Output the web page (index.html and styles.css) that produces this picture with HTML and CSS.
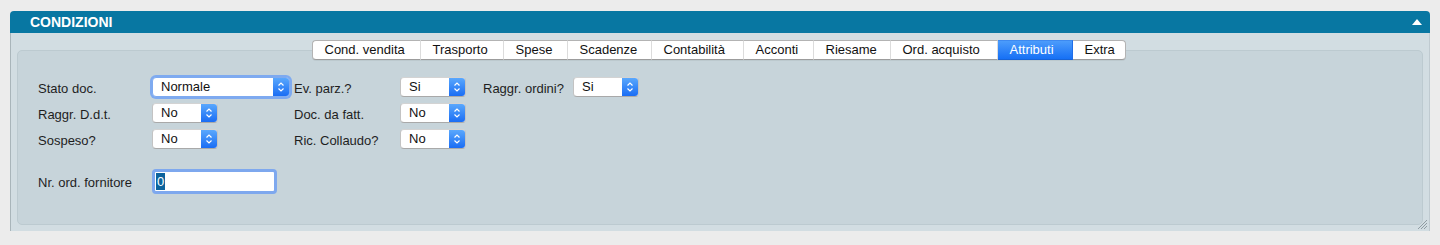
FILE: index.html
```html
<!DOCTYPE html>
<html lang="it">
<head>
<meta charset="utf-8">
<title>Condizioni</title>
<link rel="stylesheet" href="styles.css">
</head>
<body>
<div class="panel">
  <div class="header">
    <span class="title">CONDIZIONI</span>
    <svg class="collapse" width="10" height="6" viewBox="0 0 10 6"><polygon points="0,6 5,0 10,6" fill="#fff"/></svg>
  </div>
  <div class="body">
    <div class="tabs">
      <span class="tab">Cond. vendita</span>
      <span class="tab">Trasporto</span>
      <span class="tab">Spese</span>
      <span class="tab">Scadenze</span>
      <span class="tab">Contabilità</span>
      <span class="tab">Acconti</span>
      <span class="tab">Riesame</span>
      <span class="tab">Ord. acquisto</span>
      <span class="tab active">Attributi</span>
      <span class="tab">Extra</span>
    </div>
    <div class="box">
      <div class="grid">
        <span class="lbl">Stato doc.</span>
        <span class="sel wide focus"><span class="val">Normale</span><span class="btn"><svg width="8" height="12" viewBox="0 0 8 12"><path d="M1.5 4.5 L4 2 L6.5 4.5 M1.5 7.5 L4 10 L6.5 7.5" fill="none" stroke="#fff" stroke-width="1.2"/></svg></span></span>
        <span class="lbl">Ev. parz.?</span>
        <span class="sel"><span class="val">Si</span><span class="btn"><svg width="8" height="12" viewBox="0 0 8 12"><path d="M1.5 4.5 L4 2 L6.5 4.5 M1.5 7.5 L4 10 L6.5 7.5" fill="none" stroke="#fff" stroke-width="1.2"/></svg></span></span>
        <span class="lbl">Raggr. ordini?</span>
        <span class="sel"><span class="val">Si</span><span class="btn"><svg width="8" height="12" viewBox="0 0 8 12"><path d="M1.5 4.5 L4 2 L6.5 4.5 M1.5 7.5 L4 10 L6.5 7.5" fill="none" stroke="#fff" stroke-width="1.2"/></svg></span></span>

        <span class="lbl">Raggr. D.d.t.</span>
        <span class="sel"><span class="val">No</span><span class="btn"><svg width="8" height="12" viewBox="0 0 8 12"><path d="M1.5 4.5 L4 2 L6.5 4.5 M1.5 7.5 L4 10 L6.5 7.5" fill="none" stroke="#fff" stroke-width="1.2"/></svg></span></span>
        <span class="lbl">Doc. da fatt.</span>
        <span class="sel"><span class="val">No</span><span class="btn"><svg width="8" height="12" viewBox="0 0 8 12"><path d="M1.5 4.5 L4 2 L6.5 4.5 M1.5 7.5 L4 10 L6.5 7.5" fill="none" stroke="#fff" stroke-width="1.2"/></svg></span></span>
        <span></span><span></span>

        <span class="lbl">Sospeso?</span>
        <span class="sel"><span class="val">No</span><span class="btn"><svg width="8" height="12" viewBox="0 0 8 12"><path d="M1.5 4.5 L4 2 L6.5 4.5 M1.5 7.5 L4 10 L6.5 7.5" fill="none" stroke="#fff" stroke-width="1.2"/></svg></span></span>
        <span class="lbl">Ric. Collaudo?</span>
        <span class="sel"><span class="val">No</span><span class="btn"><svg width="8" height="12" viewBox="0 0 8 12"><path d="M1.5 4.5 L4 2 L6.5 4.5 M1.5 7.5 L4 10 L6.5 7.5" fill="none" stroke="#fff" stroke-width="1.2"/></svg></span></span>
        <span></span><span></span>
      </div>
      <div class="row4">
        <span class="lbl">Nr. ord. fornitore</span>
        <span class="input"><span class="selected">0</span></span>
      </div>
    </div>
    <svg class="grip" width="10" height="10" viewBox="0 0 10 10"><path d="M1 10 L10 1 M4 10 L10 4 M7 10 L10 7" stroke="#8f9ca2" stroke-width="1"/></svg>
  </div>
</div>
</body>
</html>
```
FILE: styles.css
```css
html, body {
  margin: 0;
  padding: 0;
  background: #ececec;
}
body {
  padding: 11px 0 0 10px;
  font-family: "Liberation Sans", Arial, sans-serif;
  font-size: 13px;
  color: #1e1e1e;
}
.panel {
  width: 1420px;
  position: relative;
  box-shadow: 0 1px 0 #b4b4b4;
}
.header {
  height: 22px;
  background: #0877a2;
  border-radius: 4px 4px 0 0;
  display: flex;
  align-items: center;
  justify-content: space-between;
  padding: 0 8px 0 20px;
}
.title {
  color: #fff;
  font-weight: bold;
  font-size: 14px;
}
.collapse {
  margin-top: -1px;
}
.body {
  background: #d2dde2;
  border-left: 1px solid #a9b5ba;
  border-right: 1px solid #bfcad0;
  padding: 7px 6px 6px 6px;
  position: relative;
}
.tabs {
  display: flex;
  justify-content: center;
  margin: 0 0 -10px 0;
  padding-right: 3px;
  position: relative;
  z-index: 1;
}
.tab {
  height: 18px;
  line-height: 18px;
  background: #fff;
  border-top: 1px solid #b3b3b3;
  border-bottom: 1px solid #9c9c9c;
  border-right: 1px solid #dcdcdc;
  padding: 0 12px;
  color: #111;
  box-shadow: 0 1px 0 rgba(0,0,0,0.05);
}
.tab:first-child {
  border-left: 1px solid #b3b3b3;
  border-radius: 4px 0 0 4px;
}
.tab:last-child {
  border-right: 1px solid #b3b3b3;
  border-radius: 0 4px 4px 0;
}
.tab:nth-child(1) { width: 83px; }
.tab:nth-child(2) { width: 58px; }
.tab:nth-child(3) { width: 39px; }
.tab:nth-child(4) { width: 59px; }
.tab:nth-child(5) { width: 67px; }
.tab:nth-child(6) { width: 45px; }
.tab:nth-child(7) { width: 52px; }
.tab:nth-child(8) { width: 82px; }
.tab:nth-child(9) { width: 50px; }
.tab:nth-child(10) { width: 28px; }
.tab.active {
  background: linear-gradient(#4c9cfb, #1670f5);
  color: #fff;
  border-top-color: #3d89f0;
  border-bottom-color: #1663d8;
  border-right-color: #1f6ee8;
}
.box {
  background: #c7d4da;
  border: 1px solid #bccad0;
  border-radius: 5px;
  height: 175px;
  padding: 26px 0 0 20px;
  box-sizing: border-box;
}
.grid {
  display: grid;
  grid-template-columns: 114px 142px 106px 83px 90px 66px;
  grid-auto-rows: 20px;
  row-gap: 6px;
  align-items: center;
}
.lbl {
  line-height: 20px;
  padding-top: 3px;
  white-space: nowrap;
  color: #1e1e1e;
}
.sel {
  display: flex;
  width: 66px;
  height: 20px;
  box-sizing: border-box;
  background: #fff;
  border: 1px solid #c3c3c3;
  border-top-color: #d3d3d3;
  border-bottom-color: #a9a9a9;
  border-radius: 4px;
  overflow: hidden;
}
.sel.wide {
  width: 138px;
}
.sel.focus {
  box-shadow: 0 0 0 2px #7eaaf0;
  border-color: #7eaaf0;
}
.val {
  flex: 1;
  line-height: 17px;
  padding-left: 8px;
  color: #111;
}
.btn {
  width: 16px;
  background: linear-gradient(#5aa8fd, #1a6df4);
  display: flex;
  align-items: center;
  justify-content: center;
}
.row4 {
  display: flex;
  align-items: center;
  margin-top: 20px;
}
.row4 .lbl {
  width: 114px;
  padding-top: 2px;
}
.input {
  width: 125px;
  height: 25px;
  box-sizing: border-box;
  border: 3px solid #7ea8ee;
  border-radius: 4px;
  background: #fff;
  padding: 1px 0 0 1px;
  line-height: 17px;
}
.selected {
  background: #0d639d;
  color: #fff;
  padding: 0 1px;
  display: inline-block;
  line-height: 17px;
}
.grip {
  position: absolute;
  right: 2px;
  bottom: 2px;
}
```
